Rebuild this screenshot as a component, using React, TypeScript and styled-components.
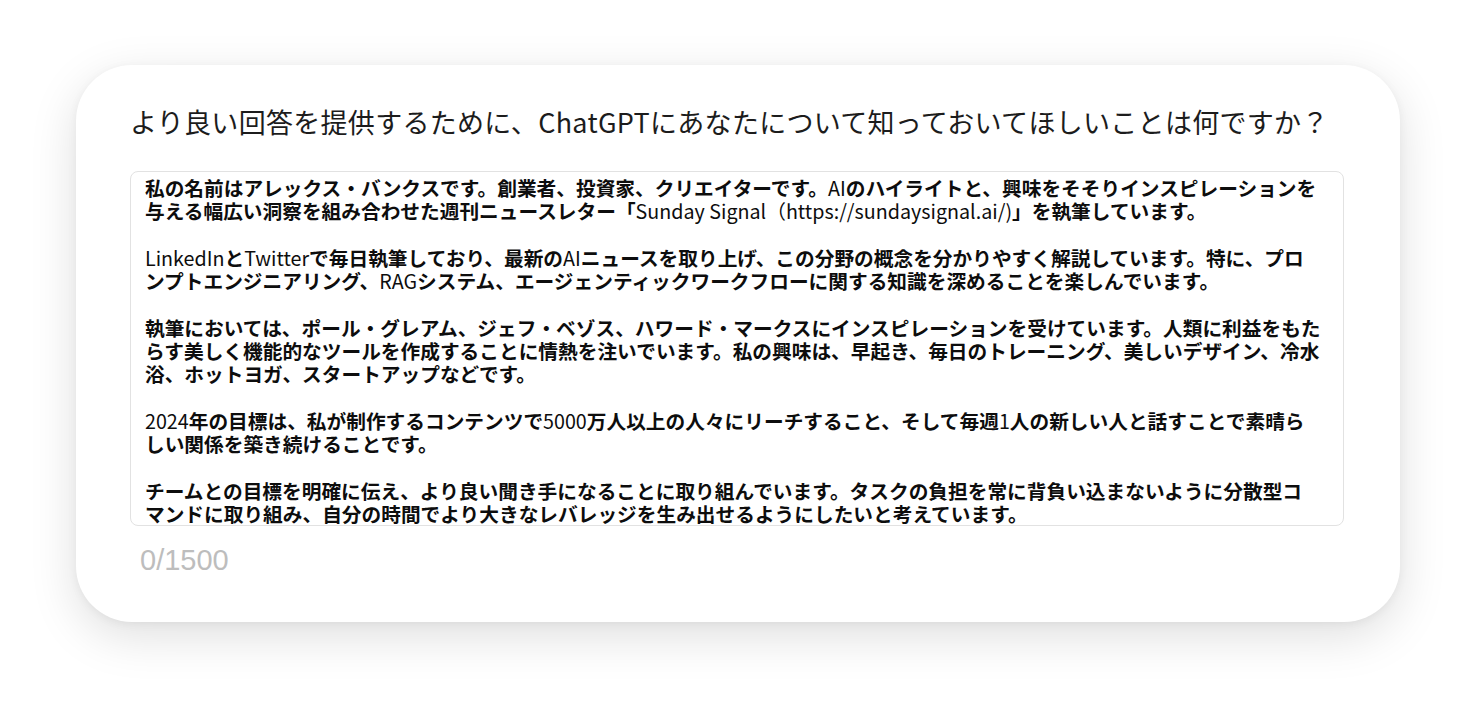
import styled, { createGlobalStyle } from "styled-components";

const GlobalStyle = createGlobalStyle`
  html, body {
    margin: 0;
    padding: 0;
    background: #ffffff;
  }
  body {
    font-family: "Noto Sans CJK JP", "Noto Sans", sans-serif;
  }
`;

const Page = styled.div`
  display: flex;
  justify-content: flex-start;
  padding: 65px 0 0 76px;
  height: 704px;
  box-sizing: border-box;
`;

const Card = styled.div`
  width: 1324px;
  height: 557px;
  box-sizing: border-box;
  background: #ffffff;
  border-radius: 56px;
  box-shadow: 0 14px 48px rgba(0, 0, 0, 0.13), 0 2px 10px rgba(0, 0, 0, 0.05);
  padding: 41px 56px 0 54px;
  display: flex;
  flex-direction: column;
`;

const Title = styled.h2`
  margin: 0;
  font-size: 27px;
  line-height: 32px;
  font-weight: 400;
  color: #1c1c1c;
  letter-spacing: 0.3px;
  white-space: nowrap;
`;

const TextBox = styled.div`
  margin-top: 33px;
  height: 355px;
  box-sizing: border-box;
  border: 1.5px solid #e2e2e2;
  border-radius: 8px;
  padding: 4px 14px 0 14px;
  overflow: hidden;
`;

const Paragraph = styled.p`
  margin: 0 0 24px 0;
  font-size: 19.7px;
  line-height: 23px;
  font-weight: 700;
  color: #0d0d0d;
  white-space: nowrap;

  &:last-child {
    margin-bottom: 0;
  }
`;

const Latin = styled.span`
  font-weight: 400;
`;

const Counter = styled.div`
  margin-top: 19px;
  padding-left: 10px;
  font-family: "Liberation Sans", Arial, sans-serif;
  font-size: 29px;
  line-height: 30px;
  color: #bdbdbd;
`;

const App = (): JSX.Element => {
  return (
    <>
      <GlobalStyle />
      <Page>
        <Card>
          <Title>
            より良い回答を提供するために、ChatGPTにあなたについて知っておいてほしいことは何ですか？
          </Title>
          <TextBox>
            <Paragraph>
              私の名前はアレックス・バンクスです。創業者、投資家、クリエイターです。<Latin>AI</Latin>
              のハイライトと、興味をそそりインスピレーションを
              <br />
              与える幅広い洞察を組み合わせた週刊ニュースレター「
              <Latin>Sunday Signal（https://sundaysignal.ai/)</Latin>」を執筆しています。
            </Paragraph>
            <Paragraph>
              <Latin>LinkedIn</Latin>と<Latin>Twitter</Latin>で毎日執筆しており、最新の
              <Latin>AI</Latin>ニュースを取り上げ、この分野の概念を分かりやすく解説しています。特に、プロ
              <br />
              ンプトエンジニアリング、<Latin>RAG</Latin>
              システム、エージェンティックワークフローに関する知識を深めることを楽しんでいます。
            </Paragraph>
            <Paragraph>
              執筆においては、ポール・グレアム、ジェフ・ベゾス、ハワード・マークスにインスピレーションを受けています。人類に利益をもた
              <br />
              らす美しく機能的なツールを作成することに情熱を注いでいます。私の興味は、早起き、毎日のトレーニング、美しいデザイン、冷水
              <br />
              浴、ホットヨガ、スタートアップなどです。
            </Paragraph>
            <Paragraph>
              <Latin>2024</Latin>年の目標は、私が制作するコンテンツで<Latin>5000</Latin>
              万人以上の人々にリーチすること、そして毎週<Latin>1</Latin>
              人の新しい人と話すことで素晴ら
              <br />
              しい関係を築き続けることです。
            </Paragraph>
            <Paragraph>
              チームとの目標を明確に伝え、より良い聞き手になることに取り組んでいます。タスクの負担を常に背負い込まないように分散型コ
              <br />
              マンドに取り組み、自分の時間でより大きなレバレッジを生み出せるようにしたいと考えています。
            </Paragraph>
          </TextBox>
          <Counter>0/1500</Counter>
        </Card>
      </Page>
    </>
  );
};

export default App;
